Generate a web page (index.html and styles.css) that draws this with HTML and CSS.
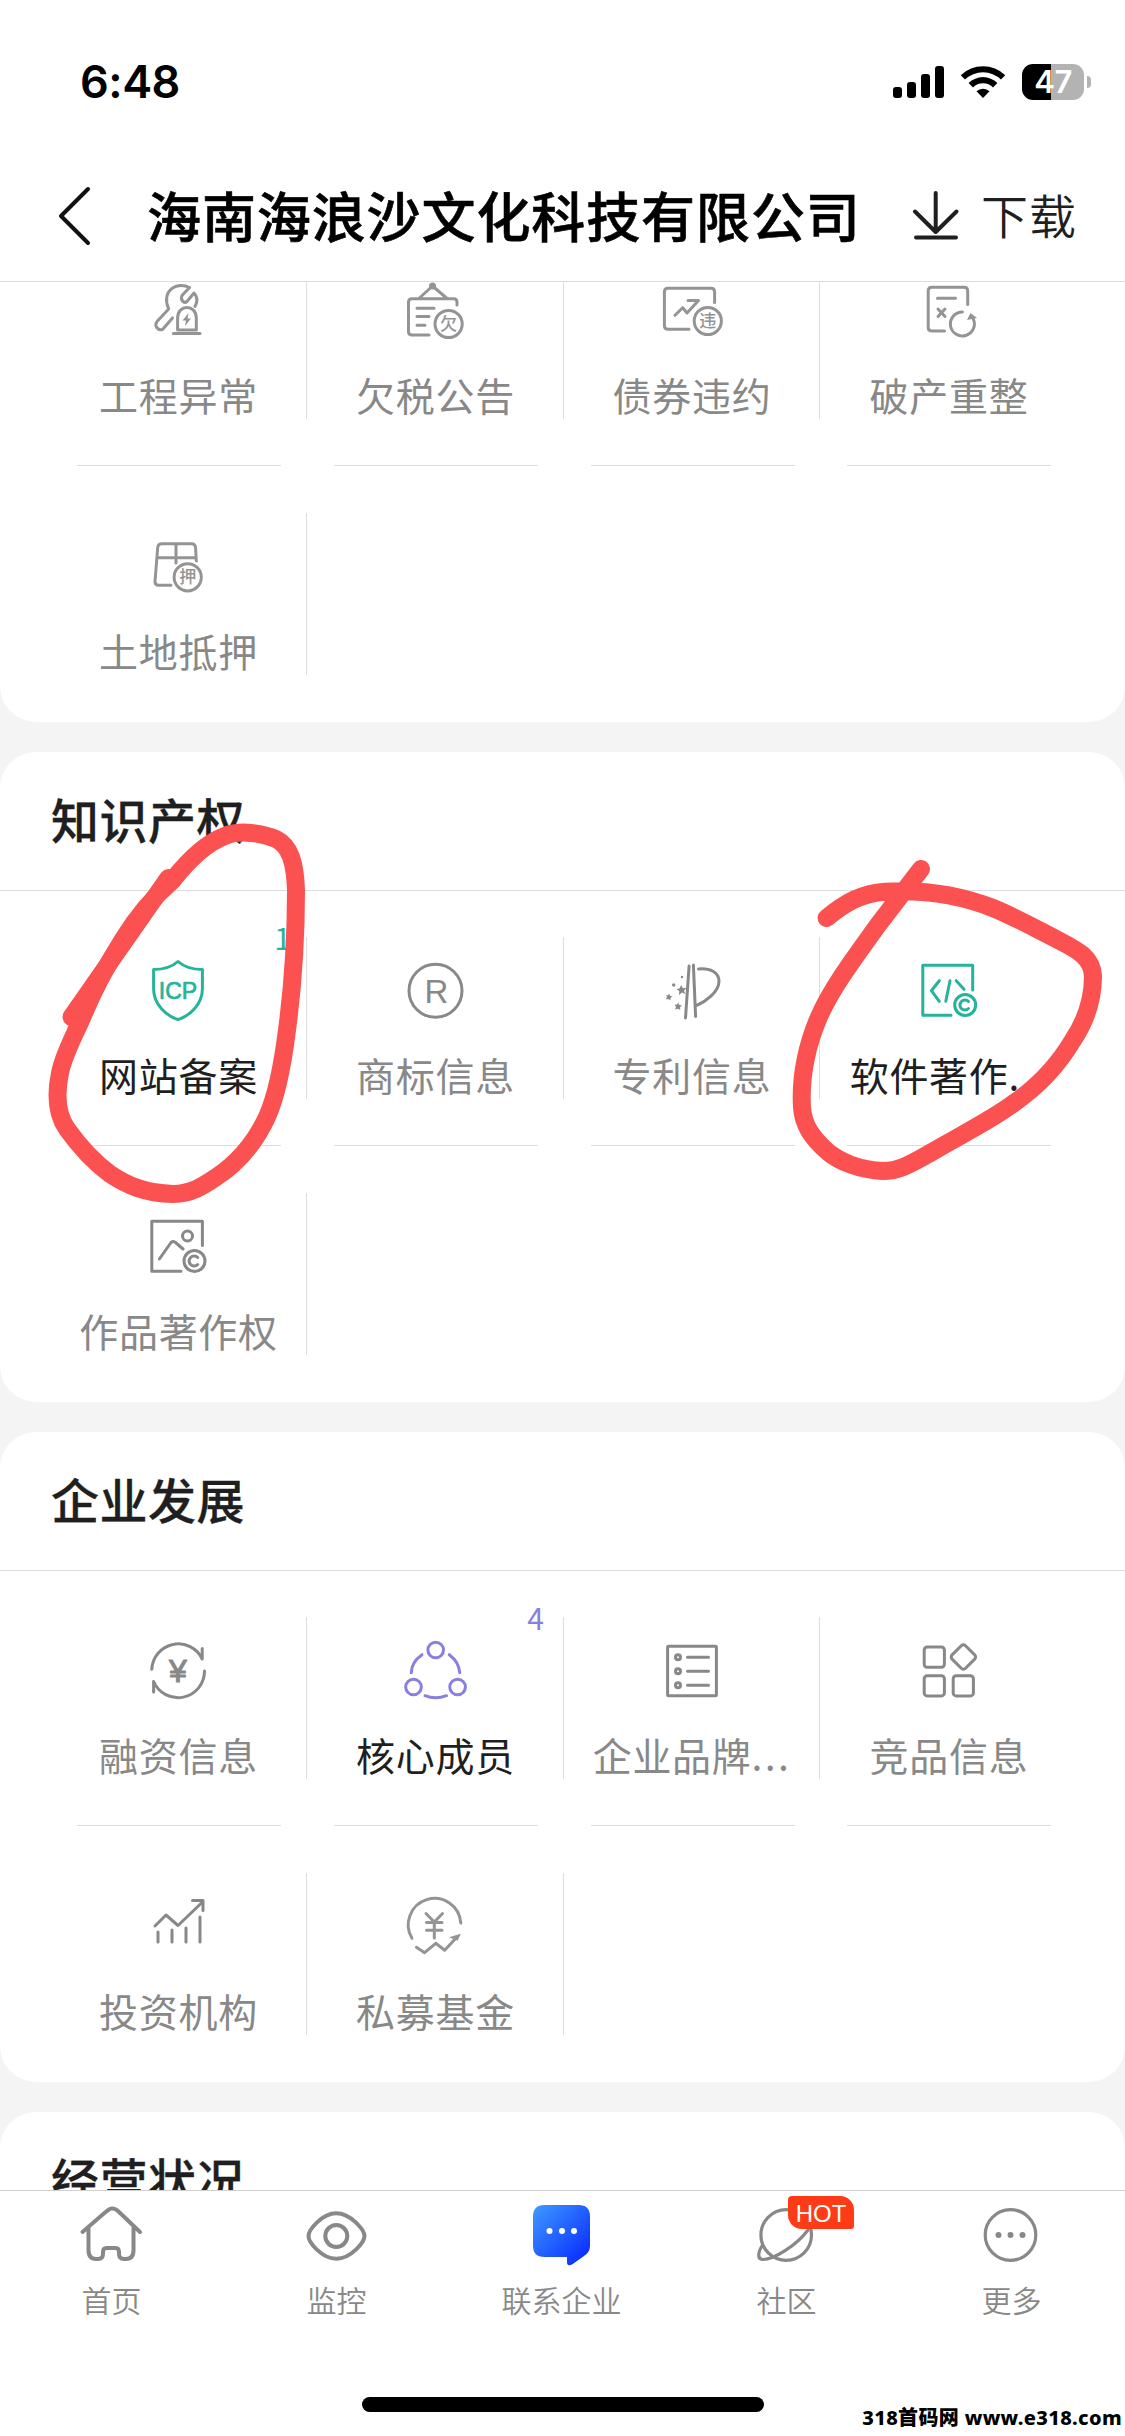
FILE: index.html
```html
<!DOCTYPE html>
<html lang="zh-CN">
<head>
<meta charset="utf-8">
<title>海南海浪沙文化科技有限公司</title>
<link rel="stylesheet" href="styles.css">
</head>
<body>
<div class="screen">
  <header class="top">
    <div class="status">
      <span class="time">6:48</span>
      <div class="status-icons">
        <svg class="signal" width="51" height="32" viewBox="0 0 51 32"><rect x="0" y="21" width="9" height="11" rx="3"/><rect x="14" y="16" width="9" height="16" rx="3"/><rect x="28" y="8" width="9" height="24" rx="3"/><rect x="42" y="0" width="9" height="32" rx="3"/></svg>
        <svg class="wifi" width="46" height="34" viewBox="0 0 46 34"><path d="M0.8 10.2A32 32 0 0 1 45.200 10.200L41 14.600A26 26 0 0 0 5 14.600Z"/><path d="M8.600 18A20.500 20.500 0 0 1 37.400 18L33 22.400A14.300 14.300 0 0 0 13 22.400Z"/><path d="M16.500 26.200A9.500 9.500 0 0 1 29.500 26.200L23 33Z"/></svg>
        <div class="battery"><span class="level">47</span></div>
        <i class="battery-cap"></i>
      </div>
    </div>
    <div class="titlebar">
      <svg class="back" width="36" height="62" viewBox="0 0 36 62"><path d="M33 4L6 31L33 58"/></svg>
      <h1>海南海浪沙文化科技有限公司</h1>
      <svg class="dl" width="48" height="52" viewBox="0 0 48 52"><path d="M23.700 3V41M3 21.500L23.700 42L44.500 21.500M4 47.500H44"/></svg>
      <span class="dl-text">下载</span>
    </div>
  </header>

  <main class="content">
    <section class="card first">
      <div class="grid">
        <div class="cell pale"><svg class="ic" viewBox="-40 -40 80 80"><path d="M11.500-22.500C7-25 -1-26-6-21.500C-12-17-13-9-9.300-1L-21 11.500C-24 16-20 21-15.500 19.500L-5.500 8M11.500-22.500L4-14.500C2-10 6-6 9-8.500L16-17C20-13 20-9 17-3.500M-.4 20V8C-.4-6 18.300-6 18.300 8V20ZM-4.700 23.500H22"/><path class="fill" d="M10.500 3L4.500 10.500H8L7 16L13 8.500H9.500Z"/></svg><span class="label">工程异常</span></div>
        <div class="cell pale"><svg class="ic" viewBox="-40 -40 80 80"><circle class="fill" cx="-2.500" cy="-24" r="3.500"/><path d="M-15.500-12L-2.500-24L11.500-12M22-5V-8Q22-11.300 18.500-11.300H-23Q-26.500-11.300-26.500-8V21.500Q-26.500 25-23 25H-6M-18-1.700H-1M-18 6.500H-6M-18 15.300H-10"/><circle cx="13.600" cy="14" r="13.600"/><text x="13.600" y="20" class="mini">欠</text></svg><span class="label">欠税公告</span></div>
        <div class="cell pale"><svg class="ic" viewBox="-40 -40 80 80"><path d="M22.600-7.500V-18Q22.600-21.700 19-21.700H-24Q-27.600-21.700-27.600-18V15.500Q-27.600 19.300-24 19.300H-3M-17 5.300L-9.300-2.300L-5 3L6.500-9.500H-4"/><circle cx="15.800" cy="11" r="13.600"/><text x="15.800" y="17" class="mini">违</text></svg><span class="label">债券违约</span></div>
        <div class="cell pale"><svg class="ic" viewBox="-40 -40 80 80"><path d="M18.700-5.500V-19Q18.700-22.700 15-22.700H-17Q-20.800-22.700-20.800-19V17.500Q-20.800 21 -17 21H-4.500M-11.500-11.700H6.500M-11-1L-4 6.500M-4-1L-11 6.500M13.500 2A12 12 0 1 0 24.300 9"/><path class="fill" d="M18 10L21.500 3L28 8Z"/></svg><span class="label">破产重整</span></div>
        <div class="cell pale"><svg class="ic" viewBox="-40 -40 80 80"><path d="M18.300-5L17.600-18Q17.400-22.300 13.500-22.300H-16Q-20-22.300-20.300-18.500L-23 15.500Q-23 19.300-19.500 19.300H-7M-20.500-8.300H18M-2-22V-3"/><circle cx="9.700" cy="11.300" r="13.600"/><text x="9.700" y="17" class="mini">押</text></svg><span class="label">土地抵押</span></div>
      </div>
    </section>

    <section class="card">
      <h2>知识产权</h2>
      <div class="grid lined">
        <div class="cell green"><b class="count one">1</b><svg class="ic" viewBox="-40 -40 80 80"><path d="M0-28.500Q-9-20.500-24.400-20.500V-1C-24.400 14-12 26 0 29.500C12 26 24.400 14 24.400-1V-20.500Q9-20.500 0-28.500Z"/><text x="0" y="8.500" class="icp">ICP</text></svg><span class="label">网站备案</span></div>
        <div class="cell"><svg class="ic" viewBox="-40 -40 80 80"><circle cx=".5" cy=".7" r="26.500"/><text x="1.500" y="13" class="reg">R</text></svg><span class="label">商标信息</span></div>
        <div class="cell"><svg class="ic" viewBox="-40 -40 80 80"><path d="M-2.900-24L-6.500 28M1.400-25L3.600 26.500M6.500-21C18-22 27-18 27-8.500C27 2 13 12 4.300 15.700"/><path class="fill" d="M-11-5L-9-1.800L-5.500-2.300L-8 .8L-6.500 4L-10 2.600L-13 5L-12.800 1L-15.500-.8L-12.200-1.800ZM-23 3.500L-21.700 6L-19.500 6.500L-21.500 8L-21.500 10.500L-23.500 9L-26 9.500L-25 7L-26 5L-23.800 5.400ZM-14 12.500L-12.600 15L-10 15.500L-12 17.300L-11.700 20L-14 18.700L-17 19.500L-16 17L-17.500 14.500L-15 14.800Z"/><circle class="fill" cx="-18.300" cy="-5" r="1.700"/><circle class="fill" cx="-10" cy="-13" r="1.200"/></svg><span class="label">专利信息</span></div>
        <div class="cell green"><svg class="ic" viewBox="-40 -40 80 80"><path d="M23.700 0V-24.700H-26.200V25.300H2M-9.700-9.300L-17.600 .7L-9.700 11.300M1-9.300L-3.200 11.300M7.200-9.300L15-.7M19.500 11.500A5 5 0 1 0 19.500 18.500"/><circle cx="16.200" cy="15" r="10.500"/></svg><span class="label">软件著作<i>...</i></span></div>
        <div class="cell"><svg class="ic" viewBox="-40 -40 80 80"><path d="M24.400-.5V-24.700H-26.200V25.300H3M-18.600 13L-7-3.500Q-4.500-5.500-2.500-3.500L5 3M19.700 11.500A5 5 0 1 0 19.700 18.500"/><circle cx="9.500" cy="-10" r="5"/><circle cx="16.500" cy="15" r="10.500"/></svg><span class="label">作品著作权</span></div>
      </div>
    </section>

    <section class="card">
      <h2>企业发展</h2>
      <div class="grid lined">
        <div class="cell"><svg class="ic" viewBox="-40 -40 80 80"><path d="M-26.200-.7A26.500 26.500 0 0 1 24.200-11V-21.500M26.500 1A26.500 26.500 0 0 1-24.400 11.500V22"/><text x="0" y="12" class="yen">¥</text></svg><span class="label">融资信息</span></div>
        <div class="cell purple"><b class="count">4</b><svg class="ic" viewBox="-40 -40 80 80"><circle cx=".7" cy="-20" r="7.800"/><circle cx="-21.500" cy="17" r="7.800"/><circle cx="22.600" cy="17" r="7.800"/><path d="M-13-15.300Q-23.500-8-23.700 2.700M14.300-15.300Q24-8 24.700 2.700M-10 25.700Q.5 30 11.500 25.700"/></svg><span class="label">核心成员</span></div>
        <div class="cell"><svg class="ic" viewBox="-40 -40 80 80"><rect x="-24.400" y="-23.700" width="48.800" height="49.400" rx="1"/><circle cx="-14" cy="-12.700" r="2.500"/><circle cx="-14" cy="1.300" r="2.500"/><circle cx="-14" cy="15.300" r="2.500"/><path d="M-4.500-12.700H16.500M-4.500 1.300H16.500M-4.500 15.300H16.500"/></svg><span class="label">企业品牌<i>...</i></span></div>
        <div class="cell"><svg class="ic" viewBox="-40 -40 80 80"><rect x="-24.800" y="-23" width="20.200" height="20.200" rx="3"/><rect x="-24.800" y="5.700" width="20.200" height="20.200" rx="3"/><rect x="4.200" y="5.700" width="20.200" height="20.200" rx="3"/><rect x="4.900" y="-22.500" width="19" height="19" rx="3" transform="rotate(45 14.400 -13)"/></svg><span class="label">竞品信息</span></div>
        <div class="cell"><svg class="ic" viewBox="-40 -40 80 80"><path d="M-23 0L-12-11L0-.5L25-24.500M14.500-25.500H25V-15.500M-20 6V16M-6 4V16M8 2V16M22-9V16"/></svg><span class="label">投资机构</span></div>
        <div class="cell pale"><svg class="ic" viewBox="-40 -40 80 80"><path d="M-23 12.300A26.300 26.300 0 1 1 25.800-3M-18.600 21.300L-10.400 26.700L.7 17.300L9.700 24.300L22 11"/><path class="fill" d="M14 11.300L25.800 7.700L22.600 14.700Z"/><path d="M-9-12.500L-.7-4L7.500-12.500M-.7-4V12M-8.500-3.500H7M-8.500 4.300H7"/></svg><span class="label">私募基金</span></div>
      </div>
    </section>

    <section class="card">
      <h2>经营状况</h2>
    </section>
  </main>

  <nav class="tabs">
    <div class="tab"><svg viewBox="-40 -30 80 70"><path d="M-29.500-4L-7-23.500Q-1.500-28-.5-27.500Q3-28 6.500-24.500L28-4M-23.500-8V14Q-23.500 23-16 23H-14Q-9 23-9 18V16Q-9 12-5.500 12H3.500Q7 12 7 16V18Q7 23 12 23H14Q21.500 23 21.500 14V-8"/></svg><span>首页</span></div>
    <div class="tab"><svg viewBox="-40 -30 80 70"><path d="M-28.500 0C-28.500-6-15-22.800-.7-22.800S27.500-6 27.500 0S14 22.800-.7 22.800S-28.500 6-28.500 0Z"/><circle cx="-.7" cy="0" r="11"/></svg><span>监控</span></div>
    <div class="tab"><svg viewBox="-40 -30 80 70"><defs><linearGradient id="g" x1="0" y1="0" x2="1" y2="1"><stop offset="0" stop-color="#3f9bff"/><stop offset=".9" stop-color="#0a2fff"/></linearGradient></defs><path class="chat" fill="url(#g)" d="M-17.500-31H16.500Q28-31 28-19.500V10Q28 16 22 20L10 28.500Q5 31 5 26V21H-17.500Q-29 21-29 9.500V-19.500Q-29-31-17.500-31Z"/><circle class="dot" cx="-12.500" cy="-5" r="3"/><circle class="dot" cx="0" cy="-5" r="3"/><circle class="dot" cx="12" cy="-5" r="3"/></svg><span>联系企业</span></div>
    <div class="tab"><svg viewBox="-40 -30 80 70"><g class="thin"><circle cx="-.8" cy="-1" r="25.300"/><path d="M-24.500 9C-29 16-30 23-24.500 23.500C-14 24 9 10 21-6"/></g></svg><em class="hot">HOT</em><span>社区</span></div>
    <div class="tab"><svg viewBox="-40 -30 80 70"><g class="thin"><circle cx="-1.500" cy="-1" r="25.300"/></g><circle class="gdot" cx="-13.500" cy="-1" r="3"/><circle class="gdot" cx="-1.500" cy="-1" r="3"/><circle class="gdot" cx="10.500" cy="-1" r="3"/></svg><span>更多</span></div>
  </nav>
  <div class="home-bar"></div>
  <div class="watermark">318首码网 www.e318.com</div>

  <svg class="marks" width="1125" height="2436" viewBox="0 0 1125 2436">
    <path d="M71.500 1017L168.500 878"/>
    <path d="M172 881C190 858 208 842 226 835.500C240 830 262 833 276 839C290 846 295 862 296 890C296 950 291 1000 287 1030C283 1062 277 1095 267 1117C254 1145 235 1165 215 1178C203 1186 192 1193.500 173 1194C145 1193 128 1186 110 1174C95 1163 80 1147 67 1129C56 1113 56 1092 60 1073C64 1053 75 1035 84 1013C96 985 110 960 122.600 940C136 918 150 900 172 881Z"/>
    <path d="M826.600 918C845 903 862 893 885 891.700C930 889 965 897 993 908C1015 917 1040 931 1057 939.500C1075 949 1092 956 1093 976C1093 1003 1083 1025 1073 1040C1060 1062 1040 1085 1014 1103C990 1121 955 1138 932 1152C912 1163 900 1171 883 1171C860 1170 840 1162 828 1152C812 1138 803 1125 802 1107C800 1075 808 1042 819 1017C832 987 858 953 878 925L921 869"/>
  </svg>
</div>
</body>
</html>
```

FILE: styles.css
```css
* { box-sizing: border-box; margin: 0; padding: 0; }
body {
  width: 1125px;
  font-family: "Noto Sans CJK SC", "Liberation Sans", sans-serif;
  background: #fff;
}
.screen {
  position: relative;
  width: 1125px;
  height: 2436px;
  overflow: hidden;
  display: flex;
  flex-direction: column;
  background: #fff;
}
svg { display: block; fill: none; }

/* status bar and title */
.top { height: 282px; border-bottom: 1px solid #ddd; flex: none; background: #fff; }
.status {
  height: 164px;
  padding: 0 34px 0 80px;
  display: flex;
  justify-content: space-between;
  align-items: center;
}
.time { font: 600 45px/56px Inter, sans-serif; letter-spacing: -.5px; }
.status-icons { display: flex; align-items: center; color: #000; }
.signal, .wifi { fill: #000; }
.wifi { margin: 0 16px; }
.battery {
  width: 62px;
  height: 36px;
  border-radius: 11px;
  background: linear-gradient(90deg, #000 47%, #b3b3b3 47%);
  text-align: center;
}
.level { font: 600 31px/36px Inter, sans-serif; color: #fff; letter-spacing: -.5px; }
.battery-cap { width: 4px; height: 12px; margin-left: 3px; border-radius: 0 6px 6px 0; background: #b3b3b3; }
.titlebar { height: 104px; padding-left: 55px; display: flex; align-items: center; }
.back path { stroke: #111; stroke-width: 4; stroke-linecap: round; stroke-linejoin: round; }
h1 {
  margin-left: 56px;
  width: 716px;
  padding-bottom: 3px;
  font-size: 54px;
  line-height: 80px;
  font-weight: 500;
  letter-spacing: .9px;
  white-space: nowrap;
  color: #000;
  -webkit-text-stroke: .6px #000;
}
.dl { margin-left: 49px; }
.dl path { stroke: #1f1f1f; stroke-width: 4; stroke-linecap: round; stroke-linejoin: round; }
.dl-text { margin-left: 21px; padding-bottom: 5px; font-size: 47px; letter-spacing: 1px; font-weight: 350; color: #1f1f1f; white-space: nowrap; }

/* scrolling cards */
.content {
  height: 1908px;
  flex: none;
  overflow: hidden;
  background: #f4f4f4;
  display: flex;
  flex-direction: column;
  gap: 30px;
}
.card { flex: none; background: #fff; border-radius: 36px; }
.card.first { margin-top: -72px; border-radius: 0 0 36px 36px; }
h2 {
  height: 138px;
  padding-left: 51px;
  font-size: 48px;
  line-height: 132px;
  font-weight: 500;
  letter-spacing: .5px;
  color: #1f1f1f;
  -webkit-text-stroke: .3px #1f1f1f;
}
.grid {
  display: grid;
  grid-template-columns: 257px 257px 256px 258px;
  grid-auto-rows: 256px;
  padding-left: 50px;
}
.lined { box-shadow: inset 0 1px #ddd; }
.cell {
  position: relative;
  display: flex;
  flex-direction: column;
  align-items: center;
  padding-top: 60px;
  color: #888;
}
.cell:not(:nth-child(4n))::before {
  content: "";
  position: absolute;
  right: 0;
  top: 47px;
  width: 1px;
  height: 162px;
  background: #ddd;
}
.cell:nth-child(-n+4)::after {
  content: "";
  position: absolute;
  left: 26.5px;
  bottom: 0;
  width: 204px;
  height: 1px;
  background: #ddd;
}
.ic { width: 80px; height: 80px; margin-left: -1px; stroke: currentColor; stroke-width: 3; stroke-linecap: round; stroke-linejoin: round; }
.ic .fill { fill: currentColor; stroke: none; }
.ic text { fill: currentColor; stroke: none; text-anchor: middle; }
.ic .mini { font-size: 17px; font-weight: 500; }
.ic .icp { font: 23px "Liberation Sans", sans-serif; stroke: currentColor; stroke-width: .7; }
.reg { font: 33px "Liberation Sans", sans-serif; }
.ic .yen { font: 32px "Liberation Sans", sans-serif; stroke: currentColor; stroke-width: 1.2; }
.label {
  margin-top: 15px;
  font-size: 39px;
  line-height: 58px;
  letter-spacing: .7px;
  white-space: nowrap;
  color: #888;
}
.label i { font-style: normal; letter-spacing: 2.4px; }
.pale .ic { color: #949494; }
.green { color: #25b39a; }
.purple { color: #8880e0; }
.green .label, .purple .label { color: #1f1f1f; }
.count { position: absolute; top: 29px; right: 20px; font: 30px/36px "Noto Sans CJK SC", sans-serif; }
.count.one { right: 16px; }

/* bottom tabs */
.tabs {
  height: 246px;
  flex: none;
  border-top: 1px solid #d0d0d0;
  background: #fff;
  display: grid;
  grid-template-columns: repeat(5, 225px);
}
.tab { position: relative; display: flex; flex-direction: column; align-items: center; padding-top: 15px; }
.tab svg { width: 80px; height: 70px; margin-left: -1px; stroke: #888; stroke-width: 4; stroke-linecap: round; overflow: visible; }
.tab:first-child svg { margin-left: -2px; }
.tab .thin { stroke-width: 3.2; }
.tab .chat, .tab .dot, .tab .gdot { stroke: none; }
.tab .dot { fill: #fff; }
.tab .gdot { fill: #888; }
.tab span { margin-top: 1px; padding-right: 2px; font-size: 30px; line-height: 44px; font-weight: 350; color: #888; }
.hot {
  position: absolute;
  left: 113px;
  top: 5px;
  width: 66px;
  height: 33px;
  border-radius: 4px 14px 3px 14px;
  background: #ff3b17;
  color: #fff;
  font: 24px/35px "Liberation Sans", sans-serif;
  text-align: center;
}
.home-bar { position: absolute; left: 362px; top: 2397px; width: 402px; height: 15px; border-radius: 8px; background: #000; }
.watermark {
  position: absolute;
  right: 3px;
  top: 2404px;
  font: 800 20px/28px "Noto Sans", "Noto Sans CJK SC", sans-serif;
  letter-spacing: .35px;
  white-space: nowrap;
  color: #000;
}
.marks { position: absolute; left: 0; top: 0; pointer-events: none; stroke: #fb5151; stroke-width: 18; stroke-linecap: round; stroke-linejoin: round; }
```
